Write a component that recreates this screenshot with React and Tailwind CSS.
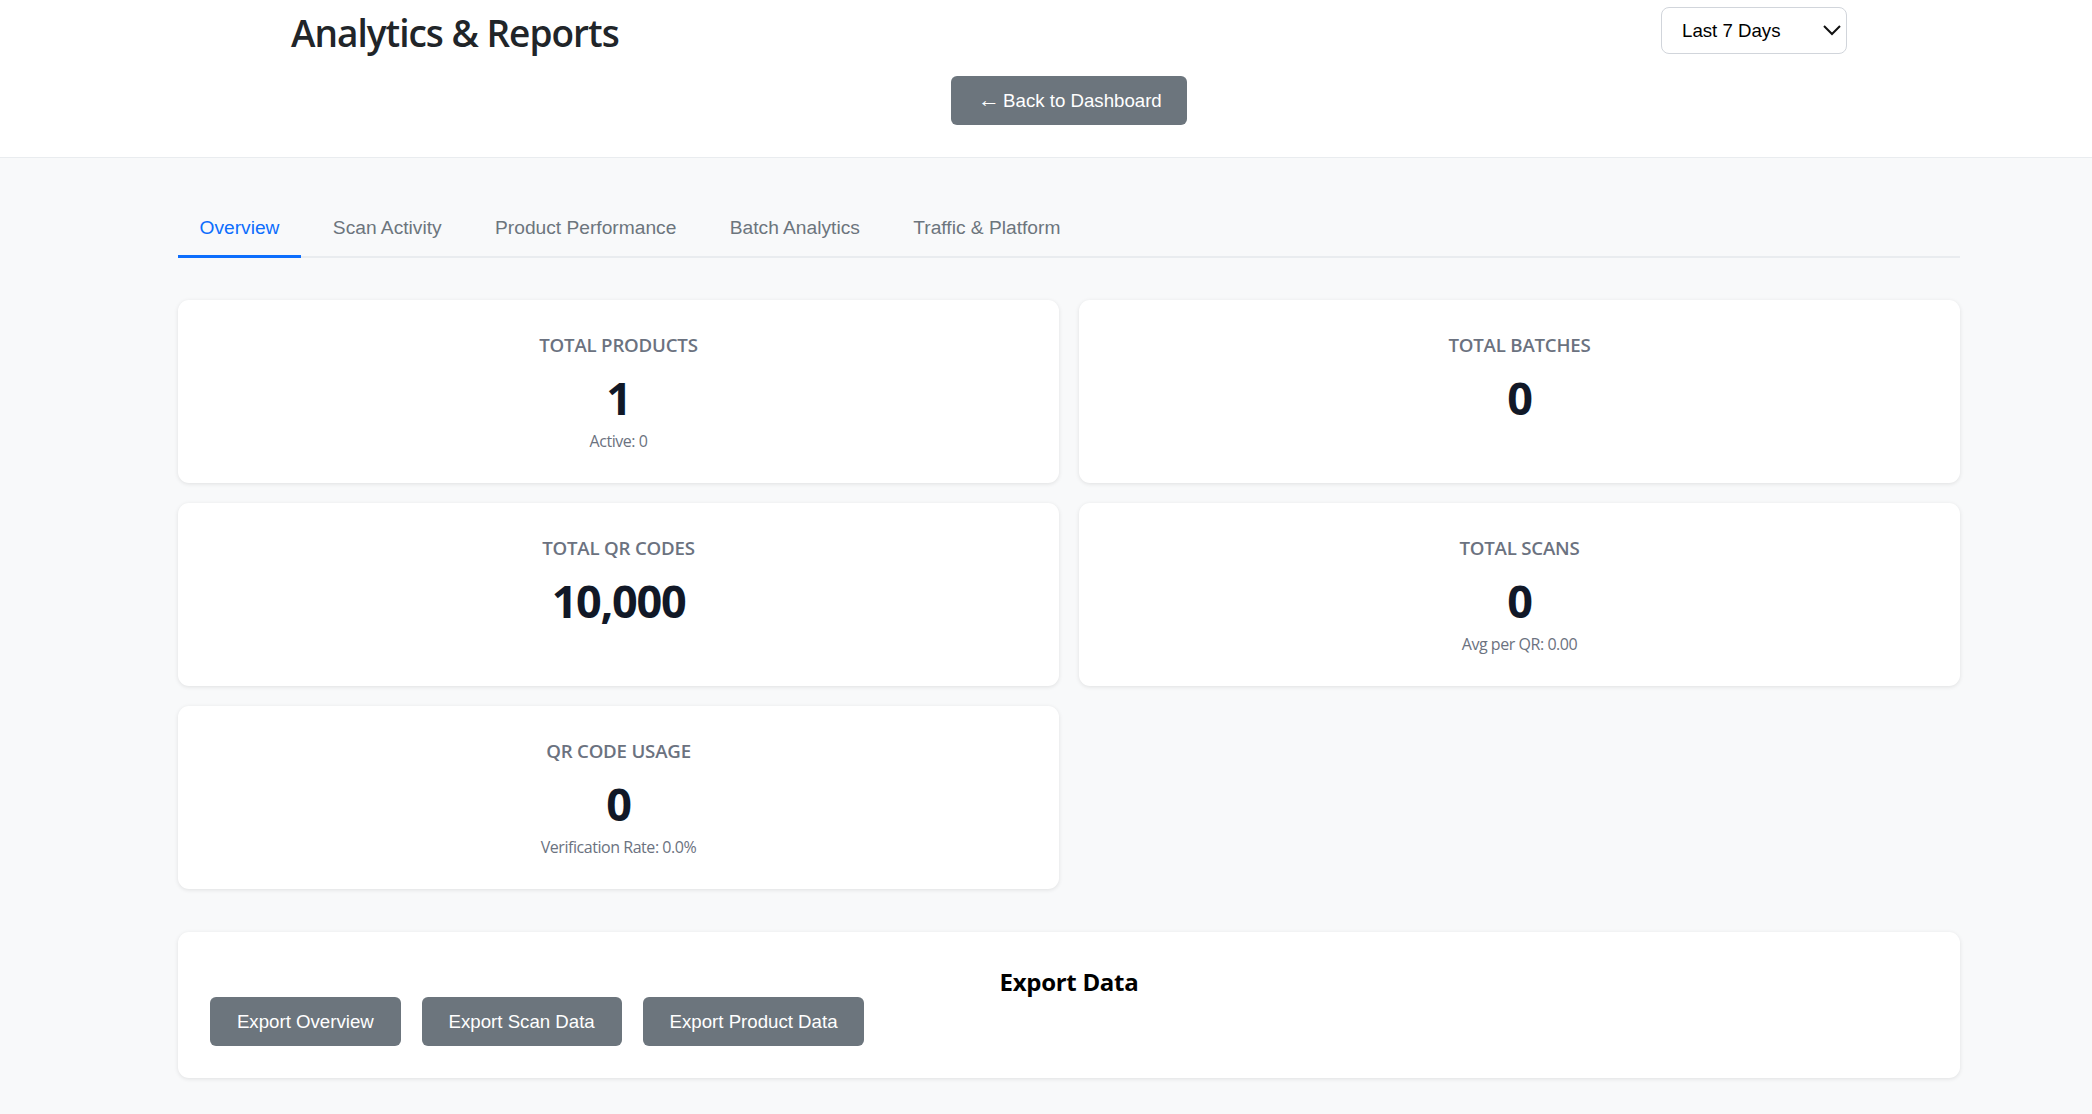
import React, { useState } from 'react'

const tabs = ['Overview', 'Scan Activity', 'Product Performance', 'Batch Analytics', 'Traffic & Platform']

const stats = [
  { label: 'Total Products', value: '1', sub: 'Active: 0' },
  { label: 'Total Batches', value: '0' },
  { label: 'Total QR Codes', value: '10,000' },
  { label: 'Total Scans', value: '0', sub: 'Avg per QR: 0.00' },
  { label: 'QR Code Usage', value: '0', sub: 'Verification Rate: 0.0%' },
]

const exportButtons = ['Export Overview', 'Export Scan Data', 'Export Product Data']

const uiFont = "font-['Open_Sans',sans-serif]"
const btnFont = "font-['Liberation_Sans',sans-serif]"

function GreyButton({ children, className = '' }) {
  return (
    <button className={`h-[49px] whitespace-nowrap rounded-[6px] bg-[#6c757d] px-[26.9px] text-[18.67px] text-white ${btnFont} ${className}`}>
      {children}
    </button>
  )
}

function StatCard({ label, value, sub }) {
  return (
    <div className="h-[183px] rounded-[11px] bg-white pt-[33px] text-center shadow-[0_1px_4px_rgba(0,0,0,0.1)]">
      <div className={`h-[24px] text-[18.67px] font-semibold uppercase leading-[24px] tracking-[-0.2px] text-[#6b7280] ${uiFont}`}>{label}</div>
      <div className={`mt-[11px] h-[60px] text-[45px] font-bold leading-[60px] tracking-[-1.3px] text-[#111827] ${uiFont}`}>{value}</div>
      {sub ? <div className={`mt-[3px] text-[16px] leading-[20px] tracking-[-0.45px] text-[#6b7280] ${uiFont}`}>{sub}</div> : null}
    </div>
  )
}

export default function App() {
  const [range, setRange] = useState('Last 7 Days')

  return (
    <div className="min-h-[1114px] bg-[#f8f9fa]">
      <header className="h-[158px] border-b border-[#e9ecef] bg-white pl-[46px]">
        <div className="mx-auto w-[1556px]">
          <div className="flex h-[76px] items-start justify-between pt-[7px]">
            <h1 className={`text-[37px] font-semibold leading-[52px] tracking-[-1px] text-[#212529] ${uiFont}`}>Analytics &amp; Reports</h1>
            <div className="relative h-[47px] w-[186px]">
              <select
                value={range}
                onChange={event => setRange(event.target.value)}
                className={`h-full w-full appearance-none rounded-[8px] border border-[#d1d5db] bg-white pl-[20px] text-[18.67px] text-black outline-none ${btnFont}`}
              >
                <option>Last 7 Days</option>
                <option>Last 30 Days</option>
                <option>Last 90 Days</option>
              </select>
              <svg className="pointer-events-none absolute right-[6px] top-[16px] h-[14px] w-[18px]" viewBox="0 0 18 14" fill="none" stroke="#111" strokeWidth="2">
                <path d="M1 3l8 8 8-8" />
              </svg>
            </div>
          </div>
          <div className="flex justify-center">
            <GreyButton className="w-[236px] px-0">
              <span className="mr-[-2px] text-[22px] leading-none">←</span> Back to Dashboard
            </GreyButton>
          </div>
        </div>
      </header>

      <main className="pl-[46px]">
        <div className="mx-auto w-[1782px] pt-[41px]">
          <nav className="flex h-[59px] gap-[10.4px] border-b-2 border-[#e9ecef]">
            {tabs.map((tab, index) => (
              <div
                key={tab}
                className={`-mb-[2px] h-[59px] border-b-[3px] px-[21.5px] pt-[17px] text-[19.2px] leading-[24px] ${btnFont} ${index === 0 ? 'border-[#0d6efd] text-[#0d6efd]' : 'border-transparent text-[#6c757d]'}`}
              >
                {tab}
              </div>
            ))}
          </nav>

          <div className="mt-[42px] grid grid-cols-2 gap-[20px]">
            {stats.map(stat => (
              <StatCard key={stat.label} {...stat} />
            ))}
          </div>

          <section className="mt-[43px] h-[146px] rounded-[11px] bg-white px-[32px] pt-[33px] shadow-[0_1px_4px_rgba(0,0,0,0.1)]">
            <h3 className={`h-[32px] text-center text-[24px] font-bold leading-[33px] tracking-[-0.3px] text-black ${uiFont}`}>Export Data</h3>
            <div className="flex gap-[21px]">
              {exportButtons.map(label => (
                <GreyButton key={label}>{label}</GreyButton>
              ))}
            </div>
          </section>
        </div>
      </main>
    </div>
  )
}
